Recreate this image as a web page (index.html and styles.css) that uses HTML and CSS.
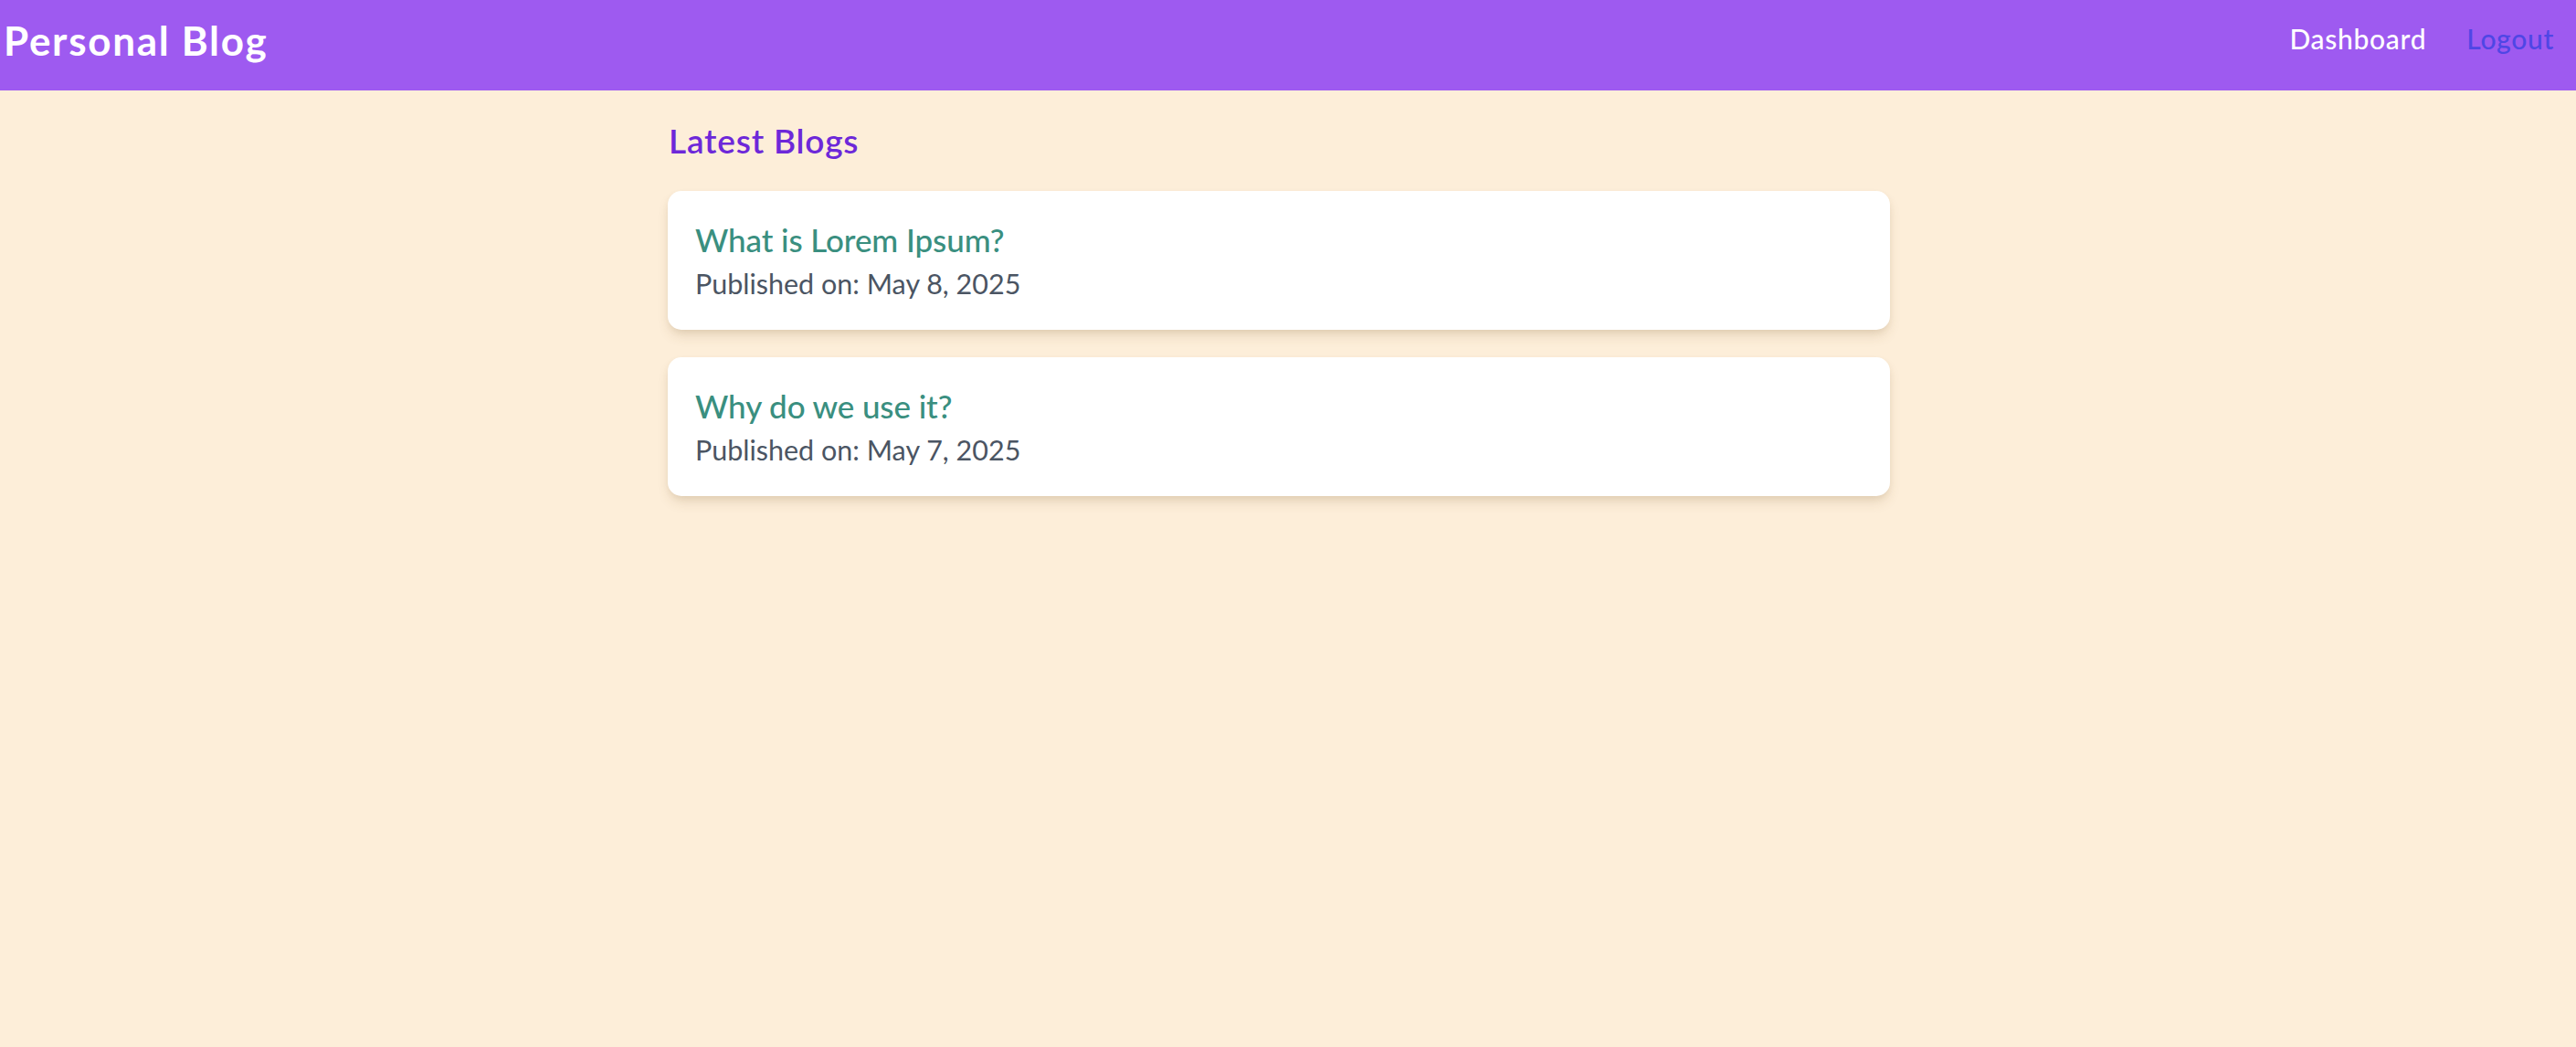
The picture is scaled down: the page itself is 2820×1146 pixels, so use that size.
FILE: index.html
```html
<!DOCTYPE html>
<html lang="en">
<head>
<meta charset="utf-8">
<title>Personal Blog</title>
<link rel="stylesheet" href="styles.css">
</head>
<body>
<header class="topbar">
  <div class="brand">Personal Blog</div>
  <nav class="nav">
    <a class="nav-link" href="#">Dashboard</a>
    <a class="nav-link logout" href="#">Logout</a>
  </nav>
</header>
<main class="wrap">
  <div class="content">
    <h2 class="section-title">Latest Blogs</h2>
    <div class="list">
      <article class="card">
        <h3 class="card-title">What is Lorem Ipsum?</h3>
        <p class="card-date">Published on: May 8, 2025</p>
      </article>
      <article class="card">
        <h3 class="card-title">Why do we use it?</h3>
        <p class="card-date">Published on: May 7, 2025</p>
      </article>
    </div>
  </div>
</main>
</body>
</html>
```
FILE: styles.css
```css
* { box-sizing: border-box; }
html, body { margin: 0; padding: 0; }
body {
  background: #fdeed9;
  font-family: "Lato", "Noto Sans", sans-serif;
  min-height: 1146px;
}
.topbar {
  height: 99px;
  background: #9e5af0;
  display: flex;
  align-items: center;
  justify-content: space-between;
  padding: 0 24px 0 4px;
}
.brand {
  color: #ffffff;
  font-size: 44px;
  font-weight: 700;
  line-height: 1;
  letter-spacing: 1.7px;
  margin-top: -12px;
}
.nav {
  display: flex;
  gap: 44px;
  align-items: center;
  margin-top: -16px;
}
.nav-link {
  color: #ffffff;
  text-decoration: none;
  font-size: 30px;
  font-weight: 500;
  letter-spacing: 0.7px;
}
.nav-link.logout { color: #4f46e5; }
.wrap {
  width: 1358px;
  margin: 0 auto;
  padding-right: 20px;
}
.content { padding-top: 30px; }
.section-title {
  margin: 0 0 30px 1px;
  color: #6d28d9;
  font-size: 37px;
  font-weight: 600;
  line-height: 50px;
  letter-spacing: 0.8px;
}
.list { display: flex; flex-direction: column; gap: 30px; }
.card {
  background: #ffffff;
  border-radius: 15px;
  padding: 28px 30px;
  height: 152px;
  box-shadow: 0 8px 14px -2px rgba(120, 90, 40, 0.16), 0 3px 8px -3px rgba(120, 90, 40, 0.14);
}
.card-title {
  margin: 0;
  color: #3a8f80;
  font-size: 35px;
  font-weight: 500;
  line-height: 50px;
  letter-spacing: -0.1px;
}
.card-date {
  margin: 0;
  color: #4b5563;
  font-size: 30.5px;
  line-height: 46px;
  letter-spacing: 0px;
}
```
